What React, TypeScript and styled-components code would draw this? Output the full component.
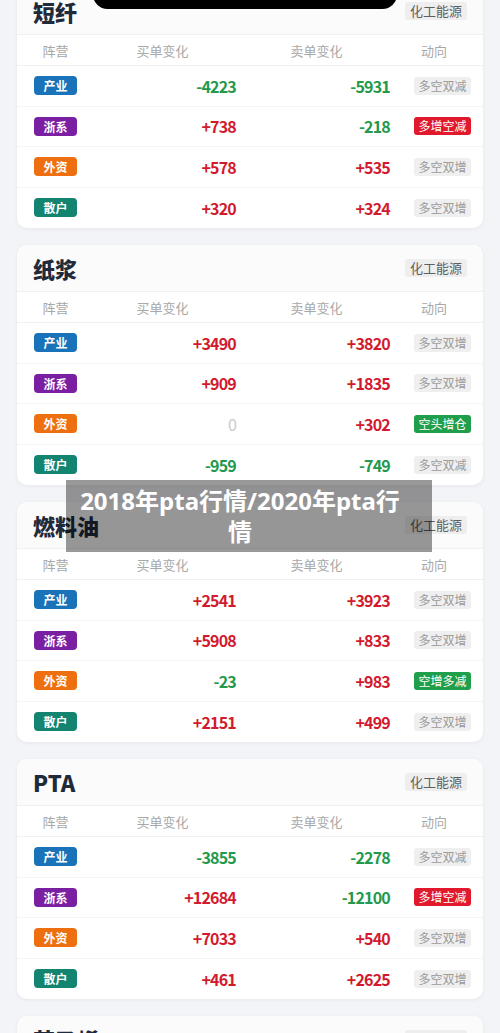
import React from "react";
import styled, { createGlobalStyle } from "styled-components";

const GlobalStyle = createGlobalStyle`
  html, body {
    margin: 0;
    padding: 0;
    background: #f3f4f7;
    font-family: "Noto Sans CJK SC", "Noto Sans", sans-serif;
  }
  * { box-sizing: border-box; }
`;

const Page = styled.div`
  position: relative;
  min-height: 1033px;
  overflow: hidden;
`;

const List = styled.div`
  display: flex;
  flex-direction: column;
  gap: 17px;
  padding: 0 17px 20px;
  margin-top: -12px;
`;

const Card = styled.section`
  background: #ffffff;
  border-radius: 10px;
  box-shadow: 0 1px 4px rgba(30, 40, 60, 0.06);
  overflow: hidden;
`;

const CardHeader = styled.header`
  height: 47px;
  padding: 0 16px;
  display: flex;
  align-items: center;
  justify-content: space-between;
  background: #fbfbfc;
  border-bottom: 1px solid #eef0f2;
`;

const Title = styled.h2`
  margin: 0;
  font-size: 22px;
  font-weight: 900;
  color: #1f2b3a;
  line-height: 1;
`;

const Tag = styled.span`
  height: 18px;
  line-height: 18px;
  padding: 0 5px;
  font-size: 13px;
  color: #5f5f5f;
  background: #eeeeee;
  border-radius: 3px;
`;

const Row = styled.div<{ $head?: boolean; $last?: boolean }>`
  display: grid;
  grid-template-columns: 53px 147px 147px 1fr;
  column-gap: 7px;
  padding: 0 12px;
  align-items: center;
  height: ${(p) => (p.$head ? "31px" : "40.5px")};
  border-bottom: ${(p) => (p.$last ? "none" : `1px solid ${p.$head ? "#f0f1f3" : "#f5f5f6"}`)};
`;

const HeadCell = styled.span`
  text-align: center;
  font-size: 13px;
  color: #a8a8a8;
`;

const CampCell = styled.div`
  display: flex;
  justify-content: center;
`;

const Camp = styled.span<{ $color: string }>`
  height: 19px;
  line-height: 19px;
  padding: 0 9px;
  border-radius: 4px;
  font-size: 12px;
  font-weight: 700;
  color: #fff;
  background: ${(p) => p.$color};
`;

const Num = styled.span<{ $tone: "up" | "down" | "zero" }>`
  text-align: right;
  font-size: 16px;
  letter-spacing: -0.8px;
  color: ${(p) => (p.$tone === "up" ? "#d21a2e" : p.$tone === "down" ? "#22994b" : "#c9c9c9")};
  font-weight: ${(p) => (p.$tone === "zero" ? 400 : 700)};
`;

const TrendCell = styled.div`
  display: flex;
  justify-content: flex-end;
`;

const Trend = styled.span<{ $kind: "gray" | "red" | "green" }>`
  height: 18px;
  line-height: 18px;
  padding: 0 4.5px;
  border-radius: 3px;
  font-size: 12px;
  color: ${(p) => (p.$kind === "gray" ? "#9a9a9a" : "#fff")};
  background: ${(p) => (p.$kind === "gray" ? "#efefef" : p.$kind === "red" ? "#e0192d" : "#1f9e4b")};
`;

const Notch = styled.div`
  position: absolute;
  top: -20px;
  left: 93px;
  width: 304px;
  height: 29px;
  background: #000;
  border-radius: 16px;
`;

const Overlay = styled.div`
  position: absolute;
  top: 480px;
  left: 66px;
  width: 366px;
  height: 72px;
  padding: 5px 28px 5px 10px;
  background: rgba(0, 0, 0, 0.4);
  color: #fff;
  font-family: "Noto Sans", "Noto Sans CJK SC", sans-serif;
  font-size: 24px;
  font-weight: 700;
  line-height: 31px;
  text-align: center;
`;

type RowData = [string, string, string, string];

const campColors: Record<string, string> = {
  产业: "#1a72b8",
  浙系: "#7a1fa2",
  外资: "#ee6f0f",
  散户: "#138470",
};

const trendKind = (t: string): "gray" | "red" | "green" => {
  if (t === "多增空减") return "red";
  if (t === "空头增仓" || t === "空增多减") return "green";
  return "gray";
};

const tone = (v: string): "up" | "down" | "zero" =>
  v.startsWith("+") ? "up" : v.startsWith("-") ? "down" : "zero";

const cards: { title: string; rows: RowData[] }[] = [
  {
    title: "短纤",
    rows: [
      ["产业", "-4223", "-5931", "多空双减"],
      ["浙系", "+738", "-218", "多增空减"],
      ["外资", "+578", "+535", "多空双增"],
      ["散户", "+320", "+324", "多空双增"],
    ],
  },
  {
    title: "纸浆",
    rows: [
      ["产业", "+3490", "+3820", "多空双增"],
      ["浙系", "+909", "+1835", "多空双增"],
      ["外资", "0", "+302", "空头增仓"],
      ["散户", "-959", "-749", "多空双减"],
    ],
  },
  {
    title: "燃料油",
    rows: [
      ["产业", "+2541", "+3923", "多空双增"],
      ["浙系", "+5908", "+833", "多空双增"],
      ["外资", "-23", "+983", "空增多减"],
      ["散户", "+2151", "+499", "多空双增"],
    ],
  },
  {
    title: "PTA",
    rows: [
      ["产业", "-3855", "-2278", "多空双减"],
      ["浙系", "+12684", "-12100", "多增空减"],
      ["外资", "+7033", "+540", "多空双增"],
      ["散户", "+461", "+2625", "多空双增"],
    ],
  },
  {
    title: "苯乙烯",
    rows: [
      ["产业", "+1210", "+986", "多空双增"],
      ["浙系", "-312", "+405", "空头增仓"],
      ["外资", "+88", "-64", "多增空减"],
      ["散户", "+275", "+190", "多空双增"],
    ],
  },
];

export default function App() {
  return (
    <Page>
      <GlobalStyle />
      <List>
        {cards.map((c) => (
          <Card key={c.title}>
            <CardHeader>
              <Title>{c.title}</Title>
              <Tag>化工能源</Tag>
            </CardHeader>
            <Row $head>
              <HeadCell>阵营</HeadCell>
              <HeadCell>买单变化</HeadCell>
              <HeadCell>卖单变化</HeadCell>
              <HeadCell>动向</HeadCell>
            </Row>
            {c.rows.map((r, i) => (
              <Row key={r[0]} $last={i === c.rows.length - 1}>
                <CampCell>
                  <Camp $color={campColors[r[0]]}>{r[0]}</Camp>
                </CampCell>
                <Num $tone={tone(r[1])}>{r[1]}</Num>
                <Num $tone={tone(r[2])}>{r[2]}</Num>
                <TrendCell>
                  <Trend $kind={trendKind(r[3])}>{r[3]}</Trend>
                </TrendCell>
              </Row>
            ))}
          </Card>
        ))}
      </List>
      <Notch />
      <Overlay>2018年pta行情/2020年pta行情</Overlay>
    </Page>
  );
}
